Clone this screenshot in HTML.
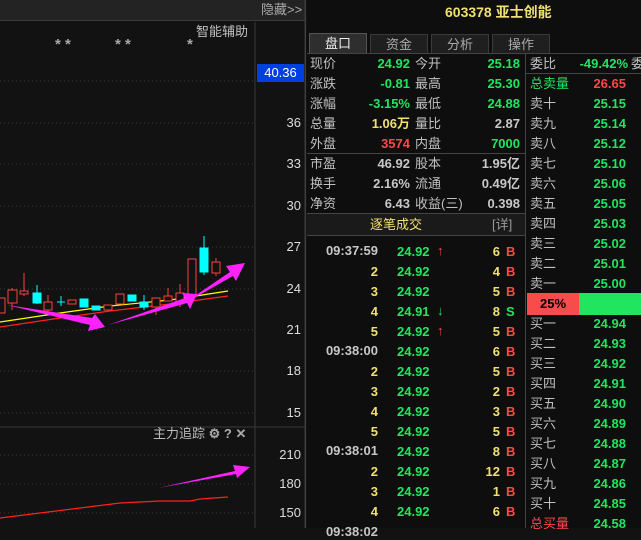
<!DOCTYPE html>
<html><head><meta charset="utf-8"><style>
*{margin:0;padding:0;box-sizing:border-box}
body{width:641px;height:528px;background:#121212;overflow:hidden;position:relative;font-family:"Liberation Sans","Noto Sans CJK SC",sans-serif;font-size:13px;color:#c0c0c0}
.a{position:absolute;white-space:nowrap;line-height:16px}
.r{text-align:right}
.g{color:#22e55f;font-weight:bold}
.rd{color:#ff4848;font-weight:bold}
.y{color:#f0e070;font-weight:bold}
.w{color:#c8c8c8;font-weight:bold}
.lb{color:#c0c0c0}
</style></head><body>
<div class="a" style="left:0;top:0;width:305px;height:21px;background:#232323;border-bottom:1px solid #3a3a3a"></div>
<div class="a" style="left:261px;top:2px;color:#aaa">隐藏&gt;&gt;</div>
<div class="a" style="left:196px;top:24px;color:#c0c0c0">智能辅助</div>
<div class="a" style="left:55px;top:37px;color:#aaa;font-size:15px;font-weight:bold">* *</div>
<div class="a" style="left:115px;top:37px;color:#aaa;font-size:15px;font-weight:bold">* *</div>
<div class="a" style="left:187px;top:37px;color:#aaa;font-size:15px;font-weight:bold">*</div>
<svg class="a" style="left:0;top:0" width="306" height="528">
<line x1="255" y1="22" x2="255" y2="528" stroke="#3a3a3a"/>
<line x1="0" y1="427" x2="305" y2="427" stroke="#3a3a3a"/>
<line x1="305" y1="0" x2="305" y2="528" stroke="#3a3a3a"/>
<g stroke="#3a3a3a" stroke-dasharray="1 3">
<line x1="0" y1="81" x2="255" y2="81"/><line x1="0" y1="123" x2="255" y2="123"/><line x1="0" y1="164" x2="255" y2="164"/><line x1="0" y1="206" x2="255" y2="206"/><line x1="0" y1="247" x2="255" y2="247"/><line x1="0" y1="289" x2="255" y2="289"/><line x1="0" y1="330" x2="255" y2="330"/><line x1="0" y1="371" x2="255" y2="371"/><line x1="0" y1="413" x2="255" y2="413"/>
<line x1="0" y1="455" x2="255" y2="455"/><line x1="0" y1="484" x2="255" y2="484"/><line x1="0" y1="513" x2="255" y2="513"/>
</g>
<polyline points="0,322 60,313 110,306 170,300 228,291" fill="none" stroke="#ffff00" stroke-width="1.2"/>
<polyline points="0,327 60,318 110,311 170,304 228,296" fill="none" stroke="#ff2020" stroke-width="1.2"/>
<g stroke="#ff4040" fill="#121212">
<rect x="-4" y="298" width="9" height="15"/><line x1="12" y1="288" x2="12" y2="310"/><rect x="8" y="290" width="9" height="13"/>
<line x1="24" y1="273" x2="24" y2="296"/><rect x="20" y="291" width="8" height="3"/>
<line x1="48" y1="295" x2="48" y2="313"/><rect x="44" y="302" width="8" height="8"/>
<rect x="68" y="300" width="8" height="4"/><rect x="104" y="305" width="8" height="5"/>
<rect x="116" y="294" width="8" height="10"/><line x1="156" y1="298" x2="156" y2="315"/><rect x="152" y="298" width="8" height="9"/>
<line x1="168" y1="288" x2="168" y2="301"/><rect x="164" y="296" width="8" height="5"/>
<line x1="180" y1="284" x2="180" y2="307"/><rect x="176" y="293" width="8" height="9"/>
<rect x="188" y="259" width="8" height="38"/>
<line x1="216" y1="258" x2="216" y2="276"/><rect x="212" y="262" width="8" height="11"/>
</g>
<g stroke="#00ffff" fill="#00ffff">
<line x1="37" y1="285" x2="37" y2="304"/><rect x="33" y="293" width="8" height="10"/>
<line x1="61" y1="296" x2="61" y2="306"/><line x1="57" y1="302" x2="65" y2="302"/>
<rect x="80" y="299" width="8" height="8"/><rect x="92" y="306" width="8" height="4"/>
<rect x="128" y="295" width="8" height="6"/><line x1="144" y1="295" x2="144" y2="310"/><rect x="140" y="302" width="8" height="5"/>
<line x1="204" y1="236" x2="204" y2="275"/><rect x="200" y="248" width="8" height="24"/>
</g>
<g fill="#ff22ff">
<polygon points="7,305 92,318 95,314 105,327 88,331 90,325"/>
<polygon points="108,325 185,298 182,293 197,294 190,309 187,303"/>
<polygon points="180,306 230,272 226,266 245,263 236,281 233,276"/>
<polygon points="158,488 235,471 233,465 250,467 237,478 236,474"/>
</g>
<polyline points="0,518 40,513 80,508 120,503 160,501 190,501 200,499 228,497" fill="none" stroke="#ff2020" stroke-width="1.2"/>
<line x1="306" y1="0" x2="306" y2="528" stroke="#444"/>
</svg>
<div class="a" style="left:257px;top:64px;width:47px;height:18px;background:#0040e0;color:#fff;text-align:center;line-height:18px">40.36</div>
<div class="a r" style="left:256px;top:115px;width:45px;color:#ddd">36</div>
<div class="a r" style="left:256px;top:156px;width:45px;color:#ddd">33</div>
<div class="a r" style="left:256px;top:198px;width:45px;color:#ddd">30</div>
<div class="a r" style="left:256px;top:239px;width:45px;color:#ddd">27</div>
<div class="a r" style="left:256px;top:281px;width:45px;color:#ddd">24</div>
<div class="a r" style="left:256px;top:322px;width:45px;color:#ddd">21</div>
<div class="a r" style="left:256px;top:363px;width:45px;color:#ddd">18</div>
<div class="a r" style="left:256px;top:405px;width:45px;color:#ddd">15</div>
<div class="a r" style="left:256px;top:447px;width:45px;color:#ddd">210</div>
<div class="a r" style="left:256px;top:476px;width:45px;color:#ddd">180</div>
<div class="a r" style="left:256px;top:505px;width:45px;color:#ddd">150</div>
<div class="a" style="left:153px;top:426px;color:#bbb">主力追踪 <b style="color:#aaa">⚙ ? ✕</b></div>

<div class="a" style="left:307px;top:0;width:334px;height:528px;background:#0e0e0e"></div>
<div class="a" style="left:445px;top:4px;color:#f0e070;font-weight:bold;font-size:14px">603378 亚士创能</div>
<div class="a" style="left:309px;top:33px;width:58px;height:21px;background:#2e2e2e;border:1px solid #555;border-bottom:none;color:#eee;text-align:center;line-height:20px">盘口</div>
<div class="a" style="left:370px;top:34px;width:58px;height:20px;background:#1f1f1f;border:1px solid #3a3a3a;color:#aaa;text-align:center;line-height:19px">资金</div>
<div class="a" style="left:431px;top:34px;width:58px;height:20px;background:#1f1f1f;border:1px solid #3a3a3a;color:#aaa;text-align:center;line-height:19px">分析</div>
<div class="a" style="left:492px;top:34px;width:58px;height:20px;background:#1f1f1f;border:1px solid #3a3a3a;color:#aaa;text-align:center;line-height:19px">操作</div>
<div class="a" style="left:307px;top:53px;width:334px;border-top:1px solid #444"></div>
<div class="a" style="left:525px;top:54px;height:474px;border-left:1px solid #444"></div>
<div class="a" style="left:307px;top:153px;width:218px;border-top:1px solid #444"></div>
<div class="a" style="left:307px;top:213px;width:218px;height:23px;background:#1a1a1a;border-top:1px solid #444;border-bottom:1px solid #444"></div>
<div class="a" style="left:526px;top:73px;width:115px;border-top:1px solid #444"></div>

<div class="a lb" style="left:310px;top:56px">现价</div><div class="a r g" style="left:340px;top:56px;width:70px">24.92</div><div class="a lb" style="left:415px;top:56px">今开</div><div class="a r g" style="left:450px;top:56px;width:70px">25.18</div>
<div class="a lb" style="left:310px;top:76px">涨跌</div><div class="a r g" style="left:340px;top:76px;width:70px">-0.81</div><div class="a lb" style="left:415px;top:76px">最高</div><div class="a r g" style="left:450px;top:76px;width:70px">25.30</div>
<div class="a lb" style="left:310px;top:96px">涨幅</div><div class="a r g" style="left:340px;top:96px;width:70px">-3.15%</div><div class="a lb" style="left:415px;top:96px">最低</div><div class="a r g" style="left:450px;top:96px;width:70px">24.88</div>
<div class="a lb" style="left:310px;top:116px">总量</div><div class="a r y" style="left:340px;top:116px;width:70px">1.06万</div><div class="a lb" style="left:415px;top:116px">量比</div><div class="a r w" style="left:450px;top:116px;width:70px">2.87</div>
<div class="a lb" style="left:310px;top:136px">外盘</div><div class="a r rd" style="left:340px;top:136px;width:70px">3574</div><div class="a lb" style="left:415px;top:136px">内盘</div><div class="a r g" style="left:450px;top:136px;width:70px">7000</div>
<div class="a lb" style="left:310px;top:156px">市盈</div><div class="a r w" style="left:340px;top:156px;width:70px">46.92</div><div class="a lb" style="left:415px;top:156px">股本</div><div class="a r w" style="left:450px;top:156px;width:70px">1.95亿</div>
<div class="a lb" style="left:310px;top:176px">换手</div><div class="a r w" style="left:340px;top:176px;width:70px">2.16%</div><div class="a lb" style="left:415px;top:176px">流通</div><div class="a r w" style="left:450px;top:176px;width:70px">0.49亿</div>
<div class="a lb" style="left:310px;top:196px">净资</div><div class="a r w" style="left:340px;top:196px;width:70px">6.43</div><div class="a lb" style="left:415px;top:196px">收益(三)</div><div class="a r w" style="left:450px;top:196px;width:70px">0.398</div>
<div class="a" style="left:370px;top:217px;color:#f0e070">逐笔成交</div><div class="a" style="left:492px;top:217px;color:#999">[详]</div>

<div class="a r w" style="left:310px;top:243px;width:68px">09:37:59</div><div class="a g" style="left:397px;top:244px">24.92</div><div class="a rd" style="left:437px;top:243px">↑</div><div class="a r y" style="left:460px;top:244px;width:40px">6</div><div class="a rd" style="left:506px;top:244px">B</div>
<div class="a r y" style="left:310px;top:264px;width:68px">2</div><div class="a g" style="left:397px;top:264px">24.92</div><div class="a r y" style="left:460px;top:264px;width:40px">4</div><div class="a rd" style="left:506px;top:264px">B</div>
<div class="a r y" style="left:310px;top:284px;width:68px">3</div><div class="a g" style="left:397px;top:284px">24.92</div><div class="a r y" style="left:460px;top:284px;width:40px">5</div><div class="a rd" style="left:506px;top:284px">B</div>
<div class="a r y" style="left:310px;top:304px;width:68px">4</div><div class="a g" style="left:397px;top:304px">24.91</div><div class="a g" style="left:437px;top:303px">↓</div><div class="a r y" style="left:460px;top:304px;width:40px">8</div><div class="a g" style="left:506px;top:304px">S</div>
<div class="a r y" style="left:310px;top:324px;width:68px">5</div><div class="a g" style="left:397px;top:324px">24.92</div><div class="a rd" style="left:437px;top:323px">↑</div><div class="a r y" style="left:460px;top:324px;width:40px">5</div><div class="a rd" style="left:506px;top:324px">B</div>
<div class="a r w" style="left:310px;top:343px;width:68px">09:38:00</div><div class="a g" style="left:397px;top:344px">24.92</div><div class="a r y" style="left:460px;top:344px;width:40px">6</div><div class="a rd" style="left:506px;top:344px">B</div>
<div class="a r y" style="left:310px;top:364px;width:68px">2</div><div class="a g" style="left:397px;top:364px">24.92</div><div class="a r y" style="left:460px;top:364px;width:40px">5</div><div class="a rd" style="left:506px;top:364px">B</div>
<div class="a r y" style="left:310px;top:384px;width:68px">3</div><div class="a g" style="left:397px;top:384px">24.92</div><div class="a r y" style="left:460px;top:384px;width:40px">2</div><div class="a rd" style="left:506px;top:384px">B</div>
<div class="a r y" style="left:310px;top:404px;width:68px">4</div><div class="a g" style="left:397px;top:404px">24.92</div><div class="a r y" style="left:460px;top:404px;width:40px">3</div><div class="a rd" style="left:506px;top:404px">B</div>
<div class="a r y" style="left:310px;top:424px;width:68px">5</div><div class="a g" style="left:397px;top:424px">24.92</div><div class="a r y" style="left:460px;top:424px;width:40px">5</div><div class="a rd" style="left:506px;top:424px">B</div>
<div class="a r w" style="left:310px;top:443px;width:68px">09:38:01</div><div class="a g" style="left:397px;top:444px">24.92</div><div class="a r y" style="left:460px;top:444px;width:40px">8</div><div class="a rd" style="left:506px;top:444px">B</div>
<div class="a r y" style="left:310px;top:464px;width:68px">2</div><div class="a g" style="left:397px;top:464px">24.92</div><div class="a r y" style="left:460px;top:464px;width:40px">12</div><div class="a rd" style="left:506px;top:464px">B</div>
<div class="a r y" style="left:310px;top:484px;width:68px">3</div><div class="a g" style="left:397px;top:484px">24.92</div><div class="a r y" style="left:460px;top:484px;width:40px">1</div><div class="a rd" style="left:506px;top:484px">B</div>
<div class="a r y" style="left:310px;top:504px;width:68px">4</div><div class="a g" style="left:397px;top:504px">24.92</div><div class="a r y" style="left:460px;top:504px;width:40px">6</div><div class="a rd" style="left:506px;top:504px">B</div>
<div class="a r w" style="left:310px;top:524px;width:68px">09:38:02</div>

<div class="a lb" style="left:530px;top:56px">委比</div><div class="a r g" style="left:560px;top:56px;width:68px">-49.42%</div><div class="a lb" style="left:631px;top:56px">委</div>
<div class="a g" style="left:530px;top:76px;font-weight:normal">总卖量</div><div class="a r rd" style="left:560px;top:76px;width:66px">26.65</div>
<div class="a lb" style="left:530px;top:96px">卖十</div><div class="a r g" style="left:560px;top:96px;width:66px">25.15</div>
<div class="a lb" style="left:530px;top:116px">卖九</div><div class="a r g" style="left:560px;top:116px;width:66px">25.14</div>
<div class="a lb" style="left:530px;top:136px">卖八</div><div class="a r g" style="left:560px;top:136px;width:66px">25.12</div>
<div class="a lb" style="left:530px;top:156px">卖七</div><div class="a r g" style="left:560px;top:156px;width:66px">25.10</div>
<div class="a lb" style="left:530px;top:176px">卖六</div><div class="a r g" style="left:560px;top:176px;width:66px">25.06</div>
<div class="a lb" style="left:530px;top:196px">卖五</div><div class="a r g" style="left:560px;top:196px;width:66px">25.05</div>
<div class="a lb" style="left:530px;top:216px">卖四</div><div class="a r g" style="left:560px;top:216px;width:66px">25.03</div>
<div class="a lb" style="left:530px;top:236px">卖三</div><div class="a r g" style="left:560px;top:236px;width:66px">25.02</div>
<div class="a lb" style="left:530px;top:256px">卖二</div><div class="a r g" style="left:560px;top:256px;width:66px">25.01</div>
<div class="a lb" style="left:530px;top:276px">卖一</div><div class="a r g" style="left:560px;top:276px;width:66px">25.00</div>
<div class="a" style="left:527px;top:293px;width:52px;height:22px;background:#f84c4c;color:#000;font-weight:bold;text-align:center;line-height:22px">25%</div>
<div class="a" style="left:579px;top:293px;width:62px;height:22px;background:#22e55f"></div>
<div class="a lb" style="left:530px;top:316px">买一</div><div class="a r g" style="left:560px;top:316px;width:66px">24.94</div>
<div class="a lb" style="left:530px;top:336px">买二</div><div class="a r g" style="left:560px;top:336px;width:66px">24.93</div>
<div class="a lb" style="left:530px;top:356px">买三</div><div class="a r g" style="left:560px;top:356px;width:66px">24.92</div>
<div class="a lb" style="left:530px;top:376px">买四</div><div class="a r g" style="left:560px;top:376px;width:66px">24.91</div>
<div class="a lb" style="left:530px;top:396px">买五</div><div class="a r g" style="left:560px;top:396px;width:66px">24.90</div>
<div class="a lb" style="left:530px;top:416px">买六</div><div class="a r g" style="left:560px;top:416px;width:66px">24.89</div>
<div class="a lb" style="left:530px;top:436px">买七</div><div class="a r g" style="left:560px;top:436px;width:66px">24.88</div>
<div class="a lb" style="left:530px;top:456px">买八</div><div class="a r g" style="left:560px;top:456px;width:66px">24.87</div>
<div class="a lb" style="left:530px;top:476px">买九</div><div class="a r g" style="left:560px;top:476px;width:66px">24.86</div>
<div class="a lb" style="left:530px;top:496px">买十</div><div class="a r g" style="left:560px;top:496px;width:66px">24.85</div>
<div class="a" style="left:530px;top:516px;color:#ff4848">总买量</div><div class="a r g" style="left:560px;top:516px;width:66px">24.58</div>
</body></html>
